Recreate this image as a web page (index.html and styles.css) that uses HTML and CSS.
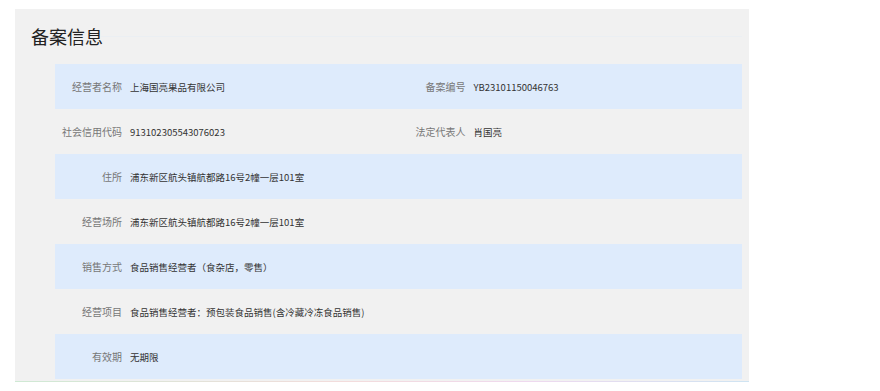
FILE: index.html
```html
<!DOCTYPE html>
<html lang="zh-CN">
<head>
<meta charset="utf-8">
<link rel="stylesheet" href="styles.css">
</head>
<body>
<div class="page">
  <section class="panel">
    <div class="title-bar">
      <h2 class="title">备案信息</h2>
      <div class="title-line"></div>
    </div>
    <div class="table">
      <div class="row blue">
        <div class="cell"><span class="label">经营者名称</span><span class="value">上海国亮果品有限公司</span></div>
        <div class="cell"><span class="label">备案编号</span><span class="value">YB23101150046763</span></div>
      </div>
      <div class="row">
        <div class="cell"><span class="label">社会信用代码</span><span class="value">913102305543076023</span></div>
        <div class="cell"><span class="label">法定代表人</span><span class="value">肖国亮</span></div>
      </div>
      <div class="row blue">
        <div class="cell full"><span class="label">住所</span><span class="value">浦东新区航头镇航都路16号2幢一层101室</span></div>
      </div>
      <div class="row">
        <div class="cell full"><span class="label">经营场所</span><span class="value">浦东新区航头镇航都路16号2幢一层101室</span></div>
      </div>
      <div class="row blue">
        <div class="cell full"><span class="label">销售方式</span><span class="value">食品销售经营者（食杂店，零售）</span></div>
      </div>
      <div class="row">
        <div class="cell full"><span class="label">经营项目</span><span class="value">食品销售经营者：预包装食品销售(含冷藏冷冻食品销售)</span></div>
      </div>
      <div class="row blue">
        <div class="cell full"><span class="label">有效期</span><span class="value">无期限</span></div>
      </div>
    </div>
  </section>
</div>
</body>
</html>
```
FILE: styles.css
```css
* { box-sizing: border-box; }
html, body { margin: 0; padding: 0; background: #ffffff; }
body {
  font-family: "Liberation Sans", Arial, "Noto Sans CJK SC", sans-serif;
}
.page {
  padding: 9px 0 0 15px;
}
.panel {
  width: 734px;
  background: #f1f1f1;
  padding: 0 7px 0 40px;
  height: 373px;
  border-bottom: 1px solid transparent;
  border-image: linear-gradient(90deg, #cfe9d4, #f3dcdc 45%, #efd9ef 70%, #cfe4f2) 1;
}
.title-bar {
  display: flex;
  align-items: center;
  height: 55px;
  margin-left: -24px;
  padding-bottom: 1px;
}
.title {
  margin: 0;
  font-size: 18px;
  font-weight: normal;
  color: #222;
  font-family: "Noto Sans CJK SC", sans-serif;
  line-height: 20px;
}
.title-line {
  flex: 1;
  height: 1px;
  background: #ebeff3;
  margin-left: -2px;
}
.table {
  display: flex;
  flex-direction: column;
}
.row {
  display: grid;
  grid-template-columns: 1fr 1fr;
  height: 45px;
  align-items: center;
}
.row.blue { background: #deebfc; }
.cell {
  display: flex;
  align-items: center;
  font-size: 10px;
  font-family: "Noto Sans CJK SC", sans-serif;
}
.cell.full { grid-column: 1 / 3; }
.label {
  width: 67px;
  text-align: right;
  color: #777;
  white-space: nowrap;
}
.value {
  margin-left: 8px;
  color: #333;
  font-size: 9.5px;
  white-space: nowrap;
}
```
